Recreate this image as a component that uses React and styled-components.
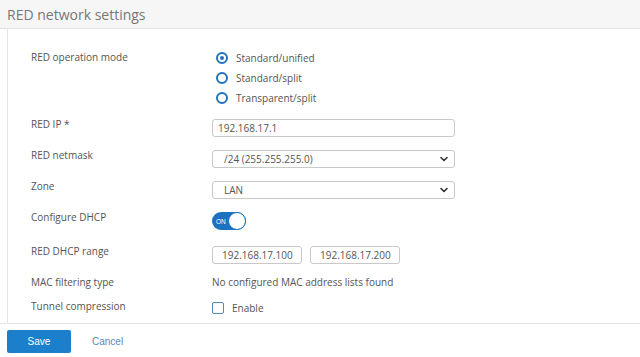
import React, { useState } from "react";
import styled, { createGlobalStyle } from "styled-components";

const GlobalStyle = createGlobalStyle`
  html, body {
    margin: 0;
    padding: 0;
    background: #ffffff;
    font-family: "Open Sans", "Liberation Sans", sans-serif;
  }
`;

const Page = styled.div`
  width: 640px;
  height: 357px;
  display: flex;
  flex-direction: column;
  overflow: hidden;
  background: #fff;
`;

const Header = styled.div`
  height: 28px;
  flex: none;
  display: flex;
  align-items: center;
  padding-left: 7px;
  background: #f6f6f6;
  border-bottom: 1px solid #e2e2e2;
`;

const Title = styled.h1`
  margin: 0;
  font-size: 14px;
  font-weight: 400;
  color: #777;
`;

const Panel = styled.div`
  margin-left: 7px;
  height: 294px;
  flex: none;
  border-left: 1px solid #e6e6e6;
  padding: 19px 0 0 23px;
  box-sizing: border-box;
  display: flex;
  flex-direction: column;
`;

const Divider = styled.div`
  height: 1px;
  background: #e4e4e4;
  flex: none;
`;

const Row = styled.div`
  display: flex;
  align-items: flex-start;
  height: ${({ $h }) => $h}px;
  flex: none;
`;

const Label = styled.div`
  width: 181px;
  flex: none;
  font-size: 10px;
  line-height: 12px;
  color: #545454;
  margin-top: ${({ $top }) => $top || 0}px;
`;

const Control = styled.div`
  display: flex;
  align-items: center;
  gap: ${({ $gap }) => $gap || 0}px;
  margin-top: ${({ $top }) => $top || 0}px;
`;

const RadioList = styled.div`
  display: flex;
  flex-direction: column;
`;

const RadioItem = styled.label`
  display: flex;
  align-items: center;
  height: 20px;
  gap: 8px;
  font-size: 10px;
  color: #545454;
  cursor: pointer;
`;

const RadioCircle = styled.span`
  width: 12px;
  height: 12px;
  box-sizing: border-box;
  border: 2px solid #1f72bb;
  border-radius: 50%;
  display: flex;
  align-items: center;
  justify-content: center;
  margin-left: 4px;

  &::after {
    content: "";
    width: 4px;
    height: 4px;
    border-radius: 50%;
    background: ${({ $checked }) => ($checked ? "#1f72bb" : "transparent")};
  }
`;

const TextInput = styled.input`
  width: ${({ $w }) => $w}px;
  height: 18px;
  box-sizing: border-box;
  border: 1px solid #c9c9c9;
  border-radius: 3px;
  padding: 0 0 0 ${({ $pad }) => $pad || 5}px;
  font-family: "Open Sans", "Liberation Sans", sans-serif;
  font-size: 10px;
  color: #555;
  outline: none;
  background: #fff;
`;

const SelectBox = styled.div`
  width: 243px;
  height: 18px;
  box-sizing: border-box;
  border: 1px solid #c9c9c9;
  border-radius: 3px;
  padding: 0 6px 0 11px;
  display: flex;
  align-items: center;
  justify-content: space-between;
  font-size: 10px;
  color: #555;
  background: #fff;
`;

const Toggle = styled.button`
  width: 34px;
  height: 18px;
  border: none;
  border-radius: 9px;
  background: #1b72bf;
  padding: 0;
  position: relative;
  cursor: pointer;
  display: flex;
  align-items: center;
`;

const ToggleText = styled.span`
  font-family: "Liberation Sans", sans-serif;
  font-size: 6.5px;
  color: #fff;
  margin-left: 4px;
`;

const Knob = styled.span`
  position: absolute;
  right: 0;
  top: 0;
  width: 18px;
  height: 18px;
  box-sizing: border-box;
  border-radius: 50%;
  background: #fff;
  border: 1.5px solid #1b72bf;
`;

const PlainText = styled.div`
  font-size: 10px;
  line-height: 12px;
  color: #545454;
`;

const CheckBox = styled.span`
  width: 12px;
  height: 12px;
  box-sizing: border-box;
  border: 1.5px solid #5487ba;
  border-radius: 2px;
  background: #fff;
`;

const CheckLabel = styled.label`
  display: flex;
  align-items: center;
  gap: 8px;
  font-size: 10px;
  color: #545454;
`;

const Footer = styled.div`
  display: flex;
  align-items: center;
  padding: 6px 0 0 7px;
  gap: 21px;
`;

const SaveButton = styled.button`
  width: 64px;
  height: 23px;
  border: none;
  border-radius: 2px;
  background: #1b7fcc;
  color: #fff;
  font-family: "Liberation Sans", sans-serif;
  font-size: 10px;
  cursor: pointer;
`;

const CancelLink = styled.span`
  font-family: "Liberation Sans", sans-serif;
  font-size: 10px;
  color: #5c87b9;
  cursor: pointer;
`;

const Chevron = () => (
  <svg width="8" height="6" viewBox="0 0 8 6">
    <path d="M1 1.5 L4 4.5 L7 1.5" fill="none" stroke="#333" strokeWidth="1.6" strokeLinecap="round" strokeLinejoin="round" />
  </svg>
);

const modes = ["Standard/unified", "Standard/split", "Transparent/split"];

export default function App() {
  const [mode, setMode] = useState(0);

  return (
    <Page>
      <GlobalStyle />
      <Header>
        <Title>RED network settings</Title>
      </Header>
      <Panel>
        <Row $h={70}>
          <Label $top={3}>RED operation mode</Label>
          <RadioList>
            {modes.map((m, i) => (
              <RadioItem key={m} onClick={() => setMode(i)}>
                <RadioCircle $checked={mode === i} />
                {m}
              </RadioItem>
            ))}
          </RadioList>
        </Row>
        <Row $h={31}>
          <Label>RED IP *</Label>
          <Control $top={1}>
            <TextInput $w={243} defaultValue="192.168.17.1" />
          </Control>
        </Row>
        <Row $h={31}>
          <Label>RED netmask</Label>
          <Control $top={1}>
            <SelectBox>
              /24 (255.255.255.0)
              <Chevron />
            </SelectBox>
          </Control>
        </Row>
        <Row $h={31}>
          <Label>Zone</Label>
          <Control $top={1}>
            <SelectBox>
              LAN
              <Chevron />
            </SelectBox>
          </Control>
        </Row>
        <Row $h={34}>
          <Label>Configure DHCP</Label>
          <Control $top={1}>
            <Toggle>
              <ToggleText>ON</ToggleText>
              <Knob />
            </Toggle>
          </Control>
        </Row>
        <Row $h={31}>
          <Label>RED DHCP range</Label>
          <Control $top={1} $gap={8}>
            <TextInput $w={90} $pad={9} defaultValue="192.168.17.100" />
            <TextInput $w={90} $pad={9} defaultValue="192.168.17.200" />
          </Control>
        </Row>
        <Row $h={24}>
          <Label>MAC filtering type</Label>
          <PlainText>No configured MAC address lists found</PlainText>
        </Row>
        <Row $h={23}>
          <Label>Tunnel compression</Label>
          <Control $top={1}>
            <CheckLabel>
              <CheckBox />
              Enable
            </CheckLabel>
          </Control>
        </Row>
      </Panel>
      <Divider />
      <Footer>
        <SaveButton>Save</SaveButton>
        <CancelLink>Cancel</CancelLink>
      </Footer>
    </Page>
  );
}
